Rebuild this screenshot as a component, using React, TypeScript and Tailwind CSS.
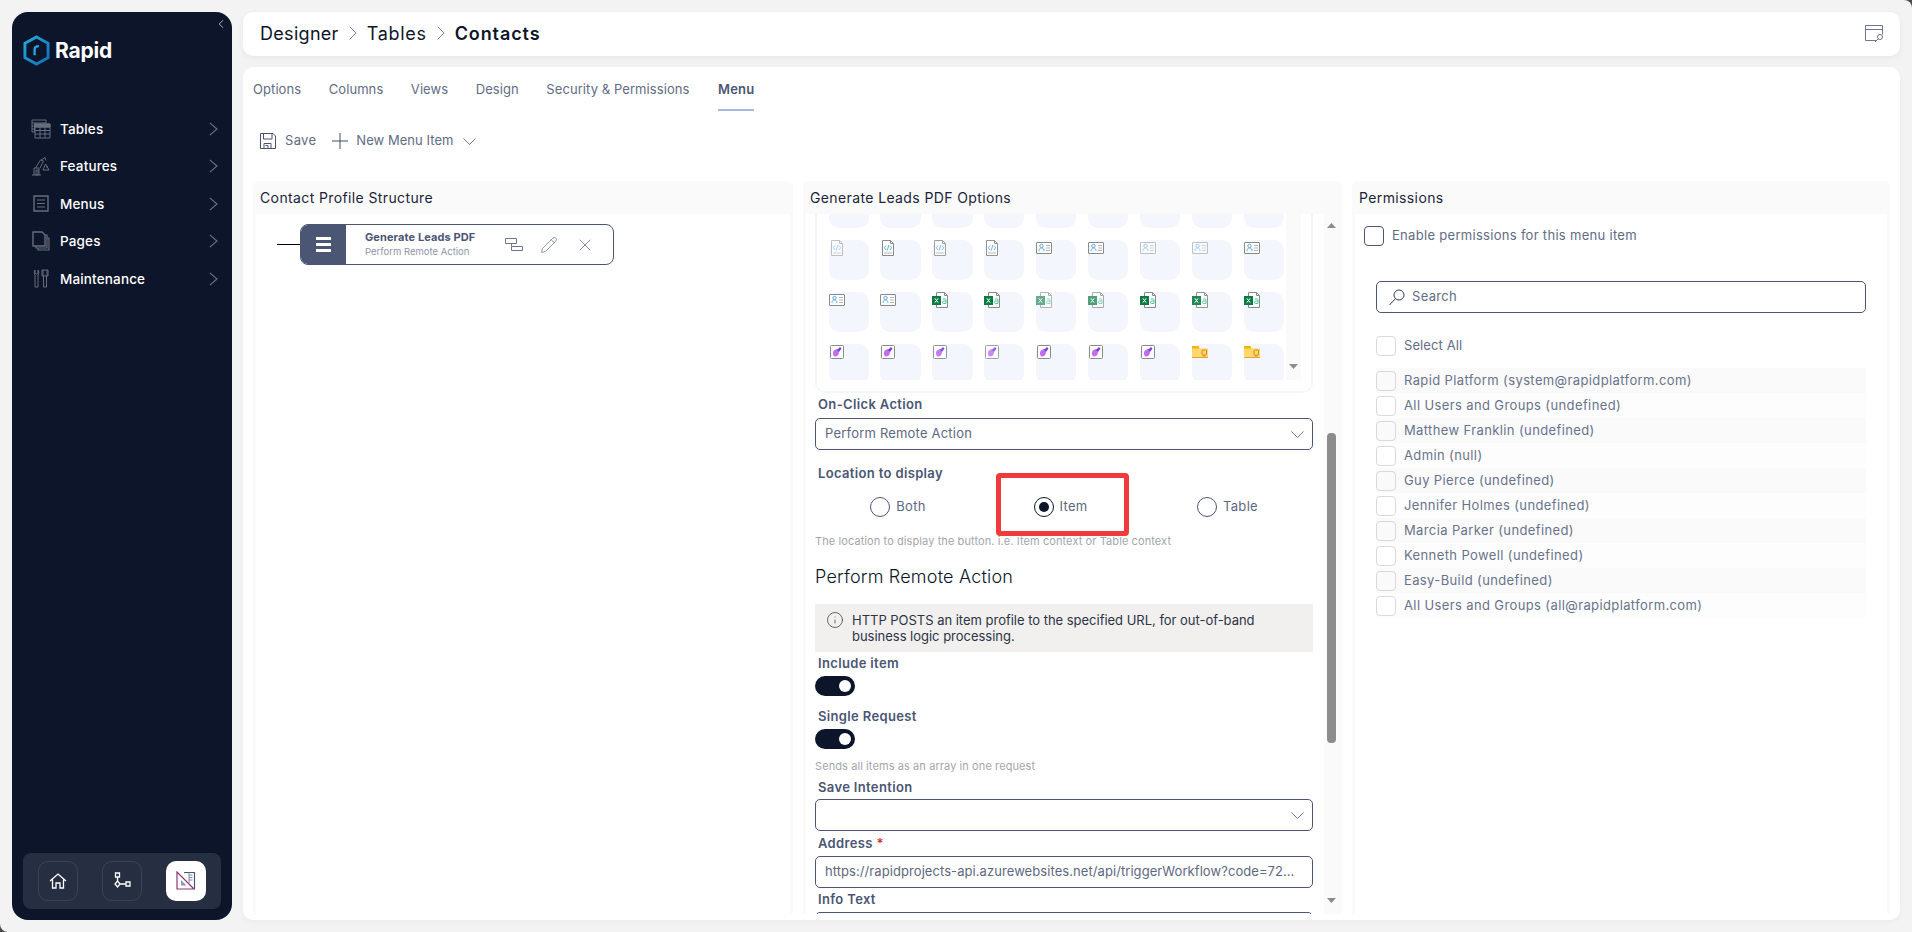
import React from "react";
import { ChevronLeft, X, Pencil, Info, Plus } from "lucide-react";

const Sheet = ({ children, className = "" }: { children: React.ReactNode; className?: string }) => (
  <svg viewBox="0 0 20 20" width="20" height="20" fill="none" stroke="#666d7c" strokeWidth="1" className={className}>{children}</svg>
);

const TablesIcon = () => (
  <Sheet>
    <path d="M1 1h14v3H1zM1 4v9h3M3.500 4v9M1 7h3M1 10h3M4 5h15v14H4z" />
    <path d="M4 8h15M4 11.500h15M4 15h15M9 8v11M14 8v11" />
    <path d="M4 5h15v3H4z" fill="#666d7c" />
  </Sheet>
);
const FeaturesIcon = () => (
  <Sheet>
    <path d="M1 19h9M3 19v-7h5v7M4.500 12l5-8 3 1-3.500 7" />
    <path d="M10 4l4-2.500 1 3M14.500 8l3.500 6h-6z" />
    <path d="M15 11h2" />
    <path d="M5 14h2v5H5z" />
  </Sheet>
);
const MenusIcon = () => (
  <Sheet>
    <path d="M3 2h14v15H3z" strokeWidth="1.400" />
    <path d="M6 6h8M6 9.500h8M6 13h8" strokeWidth="1.200" />
  </Sheet>
);
const PagesIcon = () => (
  <Sheet>
    <path d="M2 1h9l3 3v11H2z" strokeWidth="1.400" />
    <path d="M14 4h2v13H5v-2M16 7h2v12H7v-2" strokeWidth="1.200" />
  </Sheet>
);
const MaintenanceIcon = () => (
  <Sheet>
    <path d="M4 1v3l1.500 1L7 4V1M4 1c-1 1-1 4 0 5v12h3V6c1-1 1-4 0-5" />
    <path d="M12 1v6M16 1v6M11 1h6v6h-6zM12.500 7v11h3V7" />
  </Sheet>
);

const SaveIcon = () => (
  <svg viewBox="0 0 16 16" width="16" height="16" fill="none" stroke="#46536f" strokeWidth="1">
    <path d="M.5.500h12.500l2.500 2.500v12.500H.5z" />
    <path d="M3.500.500v5.500h8.500V.5M4 15.500v-5h7v5M5.500 12.500h2.500v3" />
  </svg>
);

const ChevronThin = ({ w = 13, h = 7, c = "#6c7690" }: { w?: number; h?: number; c?: string }) => (
  <svg viewBox={`0 0 ${w} ${h}`} width={w} height={h} fill="none" stroke={c} strokeWidth="1">
    <path d={`M.5.500L${w / 2} ${h - 0.5}L${w - 0.5} .5`} />
  </svg>
);

const CrumbChevron = () => (
  <svg viewBox="0 0 8 14" width="8" height="14" fill="none" stroke="#7d8798" strokeWidth="1">
    <path d="M.7.700L7 7L.7 13.300" />
  </svg>
);

const NavChevron = () => (
  <svg viewBox="0 0 9 14" width="9" height="14" fill="none" stroke="#6d7484" strokeWidth="1.100">
    <path d="M.8.800L8 7L.8 13.200" />
  </svg>
);

const CodeFile = () => (
  <svg viewBox="0 0 16 16" width="16" height="16" fill="none">
    <path d="M2.500.500h8l3 3v12h-11z" fill="#fff" stroke="#8a8a8a" />
    <path d="M10.500.500v3h3" stroke="#8a8a8a" />
    <path d="M6 5.500L4.300 7.700 6 10M10 5.500l1.700 2.200L10 10M8.800 5L7.300 10.500" stroke="#5fb0ec" />
    <path d="M4 13h8" stroke="#b0b0b0" />
  </svg>
);
const ContactCard = () => (
  <svg viewBox="0 0 16 16" width="16" height="16" fill="none">
    <rect x=".5" y="2.500" width="15" height="11" rx=".5" fill="#fff" stroke="#8a8a8a" />
    <circle cx="5.500" cy="6" r="1.700" stroke="#5fa8e8" />
    <path d="M3 11c0-2 1-3 2.500-3S8 9 8 11" stroke="#5fa8e8" />
    <path d="M10 5.500h4M10 8h4M10 10.500h4" stroke="#b5b5b5" />
  </svg>
);
const ExcelFile = () => (
  <svg viewBox="0 0 16 16" width="16" height="16" fill="none">
    <path d="M4.500.500h8l3 3v12h-11z" fill="#fff" stroke="#8a8a8a" />
    <path d="M12.500.500v3h3" stroke="#8a8a8a" />
    <rect x="0" y="4" width="9" height="9" fill="#0c7a43" />
    <path d="M2.800 6.300l3.400 4.400M6.200 6.300l-3.400 4.400" stroke="#fff" />
    <path d="M10.800 7h2.200a1 1 0 0 1 1 1v3.500M14 9h-2.300a1.200 1.200 0 0 0 0 2.500H14" stroke="#4fcf95" />
  </svg>
);
const PurpleIcon = () => (
  <svg viewBox="0 0 16 16" width="16" height="16" fill="none">
    <rect x="1.500" y="1.500" width="13" height="13" rx="1" fill="#fff" stroke="#8a8a8a" />
    <path d="M4 9c0-3 3-4 5-4l1 3c0 3-2 4.500-4 4.500C4.500 12.500 4 11 4 9z" fill="#c46cf0" />
    <path d="M8 6l3-3 1.500 1.500L10 8z" fill="#6a42d8" />
  </svg>
);
const FolderIcon = () => (
  <svg viewBox="0 0 16 16" width="16" height="16" fill="none">
    <path d="M0 2.500h6.500l1 2H16v9.500H0z" fill="#ffd76a" />
    <path d="M0 2h6.500l1 2.500H0z" fill="#f5b400" />
    <path d="M0 13h16v1H0z" fill="#e8a03a" />
    <rect x="10" y="6" width="4.500" height="5" rx=".5" fill="#ffd76a" stroke="#d48a2a" />
    <path d="M11 12h2.500" stroke="#d48a2a" />
  </svg>
);

type Tile = { k: "code" | "card" | "xls" | "pur" | "fold" | "none"; o?: string };
const tiles: Tile[] = [
  ...Array.from({ length: 9 }, () => ({ k: "none" as const })),
  { k: "code", o: "opacity-50" }, { k: "code" }, { k: "code", o: "opacity-80" }, { k: "code", o: "opacity-90" },
  { k: "card" }, { k: "card" }, { k: "card", o: "opacity-50" }, { k: "card", o: "opacity-50" }, { k: "card" },
  { k: "card" }, { k: "card" }, { k: "xls" }, { k: "xls" }, { k: "xls", o: "opacity-60" }, { k: "xls", o: "opacity-70" }, { k: "xls" }, { k: "xls", o: "opacity-90" }, { k: "xls" },
  { k: "pur" }, { k: "pur" }, { k: "pur", o: "opacity-90" }, { k: "pur", o: "opacity-80" }, { k: "pur" }, { k: "pur" }, { k: "pur" }, { k: "fold" }, { k: "fold" },
];
const iconFor = (k: Tile["k"]) =>
  k === "code" ? <CodeFile /> : k === "card" ? <ContactCard /> : k === "xls" ? <ExcelFile /> : k === "pur" ? <PurpleIcon /> : k === "fold" ? <FolderIcon /> : null;

const nav: [string, React.ReactNode][] = [
  ["Tables", <TablesIcon />],
  ["Features", <FeaturesIcon />],
  ["Menus", <MenusIcon />],
  ["Pages", <PagesIcon />],
  ["Maintenance", <MaintenanceIcon />],
];

const people = [
  "Rapid Platform (system@rapidplatform.com)",
  "All Users and Groups (undefined)",
  "Matthew Franklin (undefined)",
  "Admin (null)",
  "Guy Pierce (undefined)",
  "Jennifer Holmes (undefined)",
  "Marcia Parker (undefined)",
  "Kenneth Powell (undefined)",
  "Easy-Build (undefined)",
  "All Users and Groups (all@rapidplatform.com)",
];

const Label = ({ children, className = "" }: { children: React.ReactNode; className?: string }) => (
  <div className={`h-[22px] pl-[3px] text-[13px] leading-[22px] font-semibold tracking-[0.35px] text-[#4a5674] ${className}`}>{children}</div>
);

const Field = ({ children, chevron, tight }: { children?: React.ReactNode; chevron?: boolean; tight?: boolean }) => (
  <div className="flex h-[32px] items-center justify-between rounded-[5px] border border-[#4a5674] pr-[8px] pl-[9px]">
    <span className={`text-[13px] whitespace-nowrap text-[#5d6880] ${tight ? "tracking-[0.07px]" : "tracking-[0.2px]"}`}>{children}</span>
    {chevron && <ChevronThin />}
  </div>
);

const Toggle = () => (
  <div className="flex h-[20px] w-[40px] items-center justify-end rounded-full bg-[#0c152a] pr-[4px]">
    <div className="h-[12px] w-[12px] rounded-full bg-white" />
  </div>
);

const Radio = ({ label, on, className = "" }: { label: string; on?: boolean; className?: string }) => (
  <div className={`flex items-center justify-center gap-[6px] ${className}`}>
    <div className={`flex h-[20px] w-[20px] items-center justify-center rounded-full ${on ? "border-[1.5px] border-[#0c152a]" : "border border-[#4a5674]"}`}>
      {on && <div className="h-[10px] w-[10px] rounded-full bg-[#0c152a]" />}
    </div>
    <span className="text-[13px] tracking-[0.3px] text-[#5d6880]">{label}</span>
  </div>
);

const ScrollArrow = ({ up, c = "#8c8c8c" }: { up?: boolean; c?: string }) => (
  <svg viewBox="0 0 9 5" width="9" height="5" fill={c}>
    <path d={up ? "M4.500 0L9 5H0z" : "M0 0h9L4.500 5z"} />
  </svg>
);

const Panel = ({ title, className = "", children }: { title: string; className?: string; children: React.ReactNode }) => (
  <section className={`flex min-h-0 flex-col rounded-t-[6px] bg-[#fafafa] ${className}`}>
    <h2 className="h-[33px] shrink-0 pl-[7px] text-[14px] leading-[34px] font-normal tracking-[0.38px] text-[#1b2438]">{title}</h2>
    <div className="relative mx-[3px] min-h-0 flex-1 overflow-hidden bg-white">{children}</div>
  </section>
);

const Box = ({ soft }: { soft?: boolean }) => (
  <div className={`h-[20px] w-[20px] shrink-0 rounded-[4px] border border-[#d9d9d9] ${soft ? "bg-[#fafafa]" : "bg-white"}`} />
);

export default function App() {
  return (
    <div className="h-[932px] w-[1912px] overflow-hidden bg-[#4a4a4a]">
      <div className="flex h-full w-full gap-[11px] rounded-tr-[8px] rounded-bl-[8px] bg-[#f3f3f3] p-[12px] font-['Inter',sans-serif]">
        {/* Sidebar */}
        <aside className="relative flex w-[220px] shrink-0 flex-col rounded-[16px] bg-[#0c152a] px-[11px] pb-[11px]">
          <button className="absolute top-[5px] right-[4px] text-[#d5d8df]"><ChevronLeft size={14} strokeWidth={1.4} /></button>
          <div className="mt-[23px] flex h-[31px] items-center gap-[5px]">
            <svg viewBox="0 0 28 32" width="27" height="31" fill="none">
              <defs>
                <linearGradient id="lg" x1="0" y1="0" x2="1" y2="1">
                  <stop offset="0" stopColor="#25a9e0" />
                  <stop offset="1" stopColor="#1170b8" />
                </linearGradient>
              </defs>
              <path d="M14 2L26 8.500V23.500L14 30L2 23.500V8.500z" stroke="url(#lg)" strokeWidth="3" strokeLinejoin="miter" />
              <path d="M12 21v-6c0-2 1.500-3.500 4.500-3.500" stroke="#25a9e0" strokeWidth="2.400" />
            </svg>
            <span className="text-[21px] leading-none font-bold tracking-[-0.2px] text-white">Rapid</span>
          </div>
          <nav className="mt-[44px] flex flex-col">
            {nav.map(([t, i]) => (
              <div key={t} className="flex h-[37.5px] items-center pr-[3px] pl-[8px]">
                <span className="flex w-[29px]">{i}</span>
                <span className="flex-1 text-[13.500px] font-medium tracking-[0.15px] text-white">{t}</span>
                <NavChevron />
              </div>
            ))}
          </nav>
          <div className="mt-auto flex h-[56px] items-center justify-between rounded-[8px] bg-[#262e42] pr-[15px] pl-[15px]">
            <div className="flex h-[40px] w-[40px] items-center justify-center rounded-[10px] border border-[#3a4256]">
              <svg viewBox="0 0 18 18" width="18" height="18" fill="none" stroke="#fff" strokeWidth="1.300">
                <path d="M1 9l8-7 8 7M3.500 7.500V16H7v-5h4v5h3.500V7.500" />
              </svg>
            </div>
            <div className="flex h-[40px] w-[40px] items-center justify-center rounded-[10px] border border-[#3a4256]">
              <svg viewBox="0 0 18 18" width="18" height="18" fill="none" stroke="#fff" strokeWidth="1.300">
                <path d="M2.500 1h4v4h-4zM4.500 5v4M4.500 9l2.500 3-2.500 3L2 12zM7 12h6M13 10h4v4h-4z" />
              </svg>
            </div>
            <div className="flex h-[40px] w-[40px] items-center justify-center rounded-[10px] bg-white">
              <svg viewBox="0 0 20 20" width="20" height="20" fill="none">
                <path d="M1 1v17h17z" stroke="#8a3a72" strokeWidth="1.200" />
                <path d="M5 9v5.500h5.500z" fill="#8e97b0" />
                <path d="M8 1.500h10.500V18" stroke="#4a5674" strokeWidth="1.200" />
                <path d="M13 1.500v11M13 4h3.500M13 6.500h3.500M13 9h3.500" stroke="#7a86a8" strokeWidth="1" />
              </svg>
            </div>
          </div>
        </aside>

        {/* Content */}
        <main className="flex min-w-0 flex-1 flex-col gap-[11px]">
          <header className="flex h-[44px] shrink-0 items-center justify-between rounded-[10px] bg-white pr-[16px] pl-[17px] shadow-[0_2px_6px_rgba(0,0,0,0.05)]">
            <div className="flex items-center pb-[2px] text-[18px] tracking-[0.3px] text-[#0c152a]">
              <span>Designer</span>
              <span className="mx-[10px] flex"><CrumbChevron /></span>
              <span className="tracking-[0.7px]">Tables</span>
              <span className="mx-[10px] flex"><CrumbChevron /></span>
              <span className="font-semibold tracking-[0.9px]">Contacts</span>
            </div>
            <svg viewBox="0 0 19 18" width="19" height="18" fill="none" stroke="#6c7690" strokeWidth="1">
              <path d="M11 15.500H.5V.5h17v9M.5 4.500h17" />
              <circle cx="15" cy="12" r="2.500" />
              <path d="M13 14l-3 3" />
            </svg>
          </header>

          <div className="flex min-h-0 flex-1 flex-col rounded-[10px] bg-white px-[10px] pb-[6px] shadow-[0_2px_6px_rgba(0,0,0,0.03)]">
            <div className="flex h-[44px] shrink-0 items-start gap-[27.500px] pt-[14px] text-[13px] tracking-[0.08px] text-[#616c85]">
              {["Options", "Columns", "Views", "Design", "Security & Permissions"].map(t => (
                <span key={t} className="leading-[16px]">{t}</span>
              ))}
              <span className="ml-[1px] h-[30px] border-b-[2px] border-[#a9b8e0] leading-[16px] font-semibold tracking-[0.2px] text-[#4a5674]">Menu</span>
            </div>
            <div className="flex h-[70px] shrink-0 items-center pb-[10px] pl-[7px] text-[13px] tracking-[0.05px] text-[#616c85]">
              <SaveIcon />
              <span className="ml-[9px] tracking-[0.3px]">Save</span>
              <Plus size={26} strokeWidth={0.9} className="ml-[11px] text-[#3d4860]" />
              <span className="ml-[3px]">New Menu Item</span>
              <span className="ml-[9px] flex"><ChevronThin /></span>
            </div>

            <div className="flex min-h-0 flex-1 gap-[10px]">
              {/* Left */}
              <Panel title="Contact Profile Structure" className="w-[540px]">
                <div className="mt-[10px] flex items-center pl-[21px]">
                  <div className="h-px w-[23px] bg-black" />
                  <div className="flex h-[41px] w-[314px] overflow-hidden rounded-[8px] border border-[#4a5674]">
                    <div className="flex w-[45px] items-center justify-center bg-[#4a5674]">
                      <div className="flex flex-col gap-[3px]">
                        <div className="h-[3px] w-[15px] bg-white" />
                        <div className="h-[3px] w-[15px] bg-white" />
                        <div className="h-[3px] w-[15px] bg-white" />
                      </div>
                    </div>
                    <div className="flex w-[140px] flex-col justify-center pb-[2px] pl-[19px]">
                      <span className="text-[11px] leading-[16px] font-bold tracking-[0.1px] whitespace-nowrap text-[#4a5674]">Generate Leads PDF</span>
                      <span className="text-[9.500px] leading-[14px] whitespace-nowrap text-[#8d95a8]">Perform Remote Action</span>
                    </div>
                    <div className="flex items-center gap-[17px] pl-[19px] text-[#6c7690]">
                      <svg viewBox="0 0 18 13" width="18" height="13" fill="none" stroke="#6c7690" strokeWidth="1">
                        <path d="M.5.500h11v5H.5zM6.500 5.500v3h11v4h-11v-4" />
                      </svg>
                      <Pencil size={18} strokeWidth={1} />
                      <X size={20} strokeWidth={1} />
                    </div>
                  </div>
                </div>
              </Panel>

              {/* Middle */}
              <Panel title="Generate Leads PDF Options" className="w-[539px]">
                <div className="flex h-[700px]">
                  <div className="w-[519px] overflow-hidden pr-[11px] pl-[9px]">
                    <div className="-mt-[38px] h-[217px] rounded-[10px] border-2 border-[#f3f6fc] pr-[10px]">
                      <div className="flex h-[202px]">
                        <div className="grid flex-1 grid-cols-[repeat(9,40.3px)] gap-x-[11.600px] gap-y-[12px] overflow-hidden pt-[10px] pl-[11.500px]">
                          {tiles.map((t, i) => (
                            <div key={i} className="h-[40px] rounded-[10px] bg-[#f3f6fc]">
                              <div className={t.o ?? ""}>{iconFor(t.k)}</div>
                            </div>
                          ))}
                        </div>
                        <div className="flex w-[15px] shrink-0 flex-col items-center justify-end bg-[#fafafa] pb-[11px]">
                          <ScrollArrow />
                        </div>
                      </div>
                    </div>

                    <Label>On-Click Action</Label>
                    <div className="mt-[3px]"><Field chevron>Perform Remote Action</Field></div>

                    <Label className="mt-[12px]">Location to display</Label>
                    <div className="relative mt-[13px] grid h-[20px] grid-cols-3">
                      <Radio label="Both" />
                      <Radio label="Item" on className="pr-[7px]" />
                      <Radio label="Table" className="pr-[5px]" />
                      <div className="absolute -top-[24px] left-[181px] h-[63px] w-[133px] rounded-[4px] border-[5px] border-[#ef3b3b]" />
                    </div>
                    <p className="mt-[16px] h-[16px] text-[11px] leading-[16px] tracking-[0.09px] text-[#a3a6ad]">The location to display the button. i.e. Item context or Table context</p>
                    <h3 className="mt-[14px] h-[28px] text-[18px] leading-[28px] font-light tracking-[0.2px] text-[#0c152a]">Perform Remote Action</h3>
                    <div className="mt-[13px] flex h-[48px] items-center gap-[8px] bg-[#f1f0ee] pl-[11px]">
                      <Info size={18} strokeWidth={1} className="mb-[16px] shrink-0 text-[#3d3d3d]" />
                      <p className="text-[13px] leading-[16px] tracking-[-0.02px] whitespace-nowrap text-[#2c3446]">HTTP POSTS an item profile to the specified URL, for out-of-band<br />business logic processing.</p>
                    </div>
                    <Label>Include item</Label>
                    <div className="mt-[2px]"><Toggle /></div>
                    <Label className="mt-[9px]">Single Request</Label>
                    <div className="mt-[2px]"><Toggle /></div>
                    <p className="mt-[9px] h-[16px] text-[11px] leading-[16px] tracking-[0.09px] text-[#a3a6ad]">Sends all items as an array in one request</p>
                    <Label className="mt-[2px]">Save Intention</Label>
                    <div className="mt-[1px]"><Field chevron /></div>
                    <Label className="mt-[1px]">Address <span className="text-[#d6322f]">*</span></Label>
                    <div className="mt-[2px]"><Field tight>https://rapidprojects-api.azurewebsites.net/api/triggerWorkflow?code=72…</Field></div>
                    <Label>Info Text</Label>
                    <div className="mt-[2px]"><Field /></div>
                  </div>
                  <div className="flex w-[15px] shrink-0 flex-col items-center bg-[#fafafa] pt-[9px] pb-[11px]">
                    <ScrollArrow up />
                    <div className="mt-[205px] h-[310px] w-[9px] rounded-[4px] bg-[#8c8c8c]" />
                    <div className="mt-auto"><ScrollArrow /></div>
                  </div>
                </div>
              </Panel>

              {/* Right */}
              <Panel title="Permissions" className="w-[538px]">
                <div className="pt-[12px] pr-[21px] pl-[9px]">
                  <div className="flex items-center gap-[8px]">
                    <div className="h-[20px] w-[20px] rounded-[4px] border border-[#4a5674]" />
                    <span className="text-[13px] tracking-[0.3px] text-[#616c85]">Enable permissions for this menu item</span>
                  </div>
                  <div className="mt-[35px] ml-[12px] flex h-[32px] items-center gap-[7px] rounded-[5px] border border-[#4a5674] pl-[12px]">
                    <svg viewBox="0 0 16 17" width="16" height="17" fill="none" stroke="#333d55" strokeWidth="1">
                      <circle cx="10" cy="6" r="5" />
                      <path d="M6.500 9.500L.5 16" />
                    </svg>
                    <span className="text-[13px] tracking-[0.3px] text-[#616c85]">Search</span>
                  </div>
                  <div className="mt-[23px] ml-[12px] flex items-center gap-[8px]">
                    <Box />
                    <span className="text-[13px] tracking-[0.1px] text-[#616c85]">Select All</span>
                  </div>
                  <div className="mt-[12px] ml-[12px]">
                    {people.map((p, i) => (
                      <div key={i} className={`flex h-[25px] items-center gap-[8px] ${i % 2 === 0 ? "bg-[#fafafa]" : "bg-[#fdfdfd]"}`}>
                        <Box soft={i % 2 === 0} />
                        <span className="text-[13px] tracking-[0.38px] text-[#69738b]">{p}</span>
                      </div>
                    ))}
                  </div>
                </div>
              </Panel>
            </div>
          </div>
        </main>
      </div>
    </div>
  );
}
